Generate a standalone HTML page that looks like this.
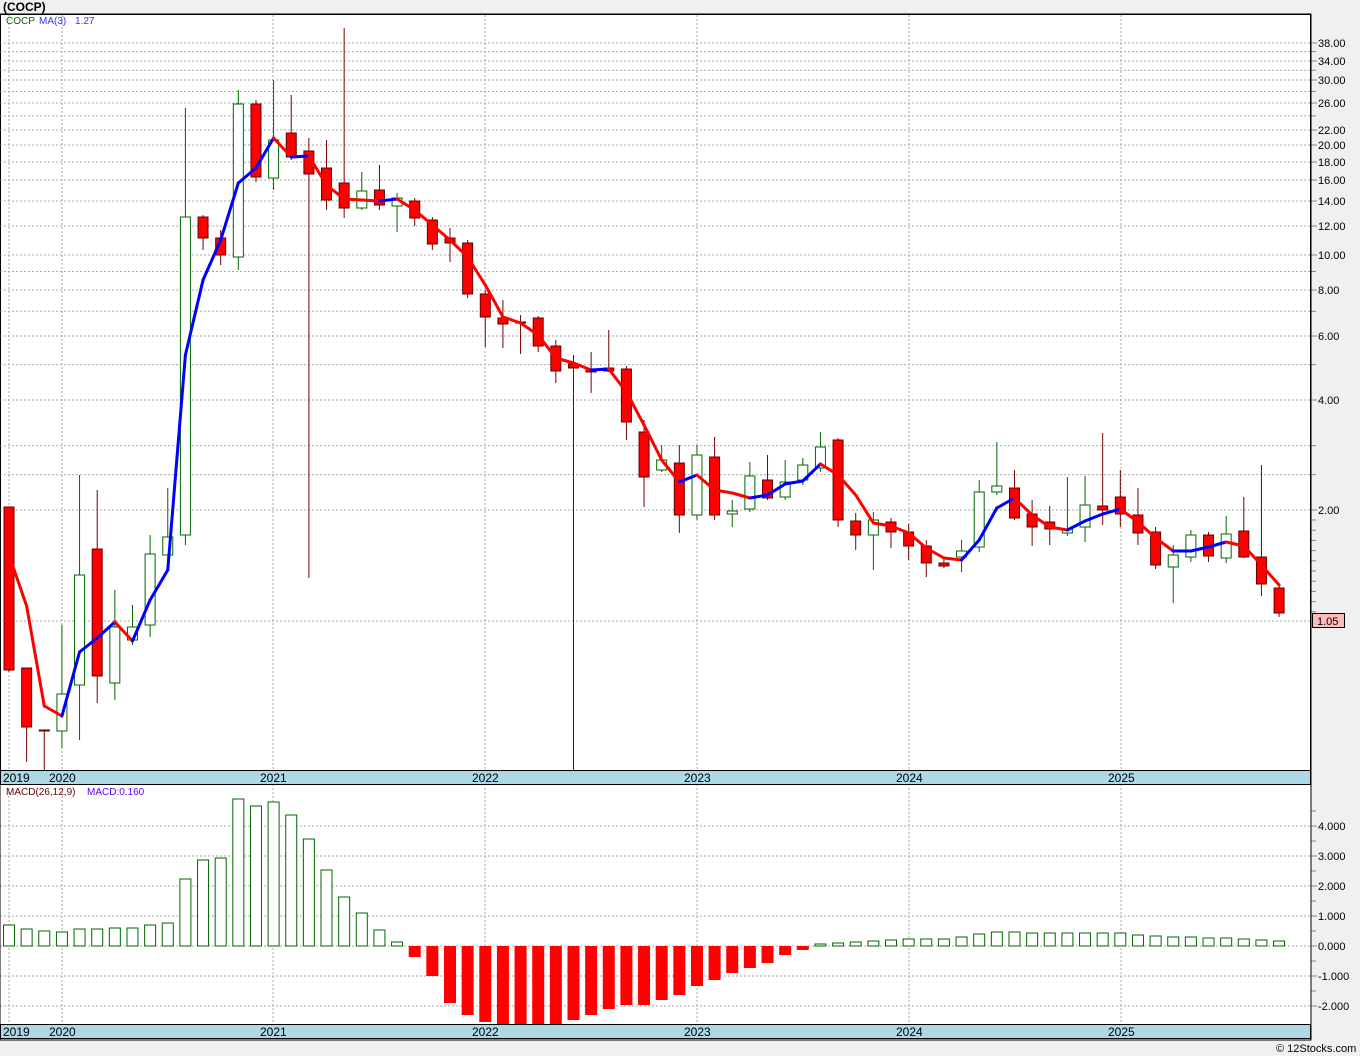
<!DOCTYPE html><html><head><meta charset="utf-8"><style>
body{margin:0;width:1360px;height:1056px;background:#f0f0f0;overflow:hidden;font-family:"Liberation Sans",sans-serif}
svg{position:absolute;left:0;top:0}
</style></head><body>
<svg id="s" width="1360" height="1056" xmlns="http://www.w3.org/2000/svg" font-family="Liberation Sans, sans-serif"></svg>
<script>
const C=[[507,670,507,672,'r'],[668,727,668,762,'r'],[730,731,730,770,'r'],[694,731,625,748,'g'],[575,685,475,740,'g'],[549,676,490,703,'r'],[627,683,590,700,'g'],[627,640,605,645,'g'],[554,625,535,637,'g'],[537,555,488,560,'g'],[217,535,108,545,'g'],[217,238,215,250,'r'],[238,255,230,265,'r'],[104,257,90,270,'g'],[104,177,100,182,'r'],[140,178,80,190,'g'],[133,157,95,160,'r'],[151,174,138,578,'r'],[168,200,140,210,'r'],[183,208,28,218,'r'],[191,208,172,210,'g'],[190,205,165,210,'r'],[198,206,193,232,'g'],[201,218,198,226,'r'],[220,244,217,250,'r'],[238,243,228,262,'r'],[243,294,240,298,'r'],[294,317,290,347,'r'],[318,324,300,348,'r'],[322,323,315,354,'r'],[318,346,316,352,'r'],[346,371,340,383,'r'],[364,368,355,770,'r'],[369,372,352,393,'r'],[368,371,330,372,'r'],[369,422,366,440,'r'],[432,477,420,507,'r'],[460,470,445,472,'g'],[463,515,445,533,'r'],[455,515,445,520,'g'],[457,515,437,520,'r'],[511,514,500,527,'g'],[476,509,462,512,'g'],[480,498,455,500,'r'],[482,497,460,500,'g'],[465,480,458,485,'g'],[447,468,432,472,'g'],[440,520,438,527,'r'],[521,535,513,550,'r'],[520,535,512,570,'g'],[522,532,518,548,'r'],[532,546,524,560,'r'],[546,563,540,577,'r'],[563,566,558,568,'r'],[551,557,540,572,'g'],[492,547,480,552,'g'],[486,492,442,495,'g'],[488,518,470,520,'r'],[514,527,500,546,'r'],[522,529,506,545,'r'],[529,533,477,536,'g'],[505,527,476,542,'g'],[506,510,433,525,'r'],[497,514,470,527,'r'],[515,533,488,545,'r'],[532,565,527,569,'r'],[555,567,545,603,'g'],[535,557,530,562,'g'],[535,556,532,562,'r'],[534,558,516,563,'g'],[531,557,497,558,'r'],[557,584,465,596,'r'],[588,613,585,617,'r']];
const MA=[555,606,706,716,652,638,622,641,600,570,355,280,240,183,168,138,157,156,185,199,200,201,199,210,225,240,257,285,317,323,335,358,363,370,369,392,425,460,482,475,490,493,498,495,484,481,464,475,495,523,526,533,548,558,560,540,508,498,515,527,530,521,514,509,522,538,551,551,547,542,546,565,585];
const M=[925,929,931,932,929,929,928,928,925,923,879,860,858,799,806,802,815,839,870,897,913,930,942,957,976,1003,1015,1022,1024,1024,1024,1024,1020,1015,1009,1005,1005,1000,995,986,980,973,968,963,955,950,944,943,942,941,940,939,939,939,937,934,932,932,933,933,933,933,933,933,935,936,937,937,938,938,939,940,941];
const X=i=>9+17.64*i;
let h='';
h+='<text x="3" y="11" font-size="12" font-weight="bold">(COCP)</text>';
h+='<rect x="0.5" y="14.5" width="1310" height="770" fill="#fff" stroke="#000"/>';
h+='<rect x="0" y="784" width="1311" height="256" fill="#fff"/>';
const yr=[62,273,485,697,909,1121];
const P=[[38,43],[34,61],[30,80],[26,103],[22,130],[20,145],[18,162],[16,180],[14,201],[12,226],[10,255],[8,290],[6,336],[4,400],[2,510]];
const g=[28,36,32,24,9,7,5,3,2.5];
for(const v of g){const y=510-158.6*(Math.log(v)-Math.log(2));if(y>20&&y<768)h+=`<line x1="0" x2="1311" y1="${y}" y2="${y}" stroke="#aaa" stroke-dasharray="2,2"/><line x1="1311" x2="1316" y1="${y}" y2="${y}" stroke="#888"/>`}
for(let y=520;y<615;y+=10.2)h+=`<line x1="1311" x2="1316" y1="${y}" y2="${y}" stroke="#888"/>`;
h+=`<line x1="0" x2="1311" y1="621" y2="621" stroke="#aaa" stroke-dasharray="2,2"/>`;
for(const [v,y] of P){h+=`<line x1="0" x2="1311" y1="${y}" y2="${y}" stroke="#aaa" stroke-dasharray="2,2"/><line x1="1311" x2="1317" y1="${y}" y2="${y}" stroke="#888"/><text x="1318" y="${y+4}" font-size="11">${v.toFixed(2)}</text>`}
for(const x of [9,...yr]){h+=`<line x1="${x}" x2="${x}" y1="15" y2="770" stroke="#aaa" stroke-dasharray="2,2"/><line x1="${x}" x2="${x}" y1="784" y2="1024" stroke="#aaa" stroke-dasharray="2,2"/>`}
for(let k=-2;k<=4;k++){const y=946-30*k;h+=`<line x1="0" x2="1311" y1="${y}" y2="${y}" stroke="#aaa" stroke-dasharray="2,2"/><line x1="1311" x2="1317" y1="${y}" y2="${y}" stroke="#888"/><text x="1318" y="${y+4}" font-size="11">${k.toFixed(3)}</text>`;h+=`<line x1="1311" x2="1316" y1="${y-15}" y2="${y-15}" stroke="#888"/>`}
C.forEach((c,i)=>{const x=X(i);const col=c[4]=='r'?'#700':'#060';h+=`<line x1="${x}" x2="${x}" y1="${c[2]}" y2="${c[3]}" stroke="${col}"/>`;
if(c[4]=='r')h+=`<rect x="${x-5}" y="${c[0]}" width="10" height="${Math.max(c[1]-c[0],1)}" fill="#f00" stroke="#600"/>`;else h+=`<rect x="${x-5}" y="${c[0]}" width="10" height="${Math.max(c[1]-c[0],1)}" fill="#fff" stroke="#060"/>`});
for(let i=1;i<MA.length;i++){h+=`<line x1="${X(i-1)}" y1="${MA[i-1]}" x2="${X(i)}" y2="${MA[i]}" stroke="${MA[i]<=MA[i-1]?'#00f':'#f00'}" stroke-width="3" stroke-linecap="round"/>`}
M.forEach((v,i)=>{const x=X(i);if(v<946)h+=`<rect x="${x-5.5}" y="${v}" width="11" height="${946-v}" fill="#fff" stroke="#060"/>`;else h+=`<rect x="${x-6}" y="946" width="12" height="${v-946}" fill="#f00"/>`});
h+='<rect x="0" y="14" width="1311" height="1026" fill="none" stroke="#000"/>';
h+='<line x1="1311" y1="14" x2="1311" y2="1040" stroke="#000"/>';
for(const y0 of [770,1024]){h+=`<rect x="0.5" y="${y0+.5}" width="1310" height="14" fill="#add8e6" stroke="#000"/><text x="3" y="${y0+12}" font-size="12">2019</text>`;yr.forEach((x,k)=>h+=`<text x="${x-13}" y="${y0+12}" font-size="12">${2020+k}</text>`)}
h+='<text x="6" y="24" font-size="10" fill="#060">COCP</text><text x="39" y="24" font-size="10" fill="#33f">MA(3)</text><text x="75" y="24" font-size="10" fill="#33f">1.27</text>';
h+='<text x="6" y="795" font-size="10" fill="#600">MACD(26,12,9)</text><text x="87" y="795" font-size="10" fill="#60f">MACD:0.160</text>';
h+='<rect x="1312.5" y="613.5" width="32" height="14" fill="#fbb" stroke="#000"/><text x="1317" y="625" font-size="11">1.05</text>';
h+='<text x="1276" y="1052" font-size="11">© 12Stocks.com</text>';
document.getElementById('s').innerHTML=h;
</script></body></html>
